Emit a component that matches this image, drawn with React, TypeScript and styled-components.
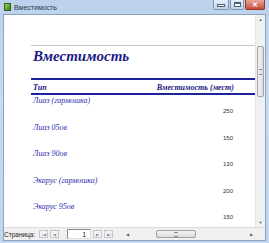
import React from 'react'
import styled, { createGlobalStyle } from 'styled-components'

const rows = [
  { name: 'Лиаз (гармошка)', seats: 250 },
  { name: 'Лиаз 05ов', seats: 150 },
  { name: 'Лиаз 90ов', seats: 130 },
  { name: 'Экарус (гармошка)', seats: 200 },
  { name: 'Экарус 95ов', seats: 150 },
]

const GlobalStyle = createGlobalStyle`
  html, body {
    margin: 0;
    padding: 0;
    background: #fff;
  }
`

const App: React.FC = () => {
  return (
    <>
      <GlobalStyle />
      <Window>
        <TitleBar>
          <AppIcon />
          <TitleText>Вместимость</TitleText>
          <Controls>
            <CtrlButton w={16}>
              <MinGlyph />
            </CtrlButton>
            <CtrlButton w={14}>
              <MaxGlyph />
            </CtrlButton>
            <CloseButton>✕</CloseButton>
          </Controls>
        </TitleBar>
        <Client>
          <Viewport>
            <Page>
              <PageRule />
              <ReportTitle>Вместимость</ReportTitle>
              <HeaderRow>
                <HeadCell>Тип</HeadCell>
                <HeadCell align="right">Вместимость (мест)</HeadCell>
              </HeaderRow>
              {rows.map((r) => (
                <Row key={r.name}>
                  <Name>{r.name}</Name>
                  <Seats>{r.seats}</Seats>
                </Row>
              ))}
            </Page>
            <VScroll>
              <ArrowBox>▲</ArrowBox>
              <VTrack>
                <VThumb>
                  <Grip />
                </VThumb>
              </VTrack>
              <ArrowBox>▼</ArrowBox>
            </VScroll>
          </Viewport>
          <StatusBar>
            <PageLabel>Страница:</PageLabel>
            <NavButton>|◀</NavButton>
            <NavButton>◀</NavButton>
            <PageInput>1</PageInput>
            <NavButton>▶</NavButton>
            <NavButton>▶|</NavButton>
            <HScroll>
              <HArrow>◀</HArrow>
              <HTrack>
                <HThumb>
                  <Grip vertical />
                </HThumb>
              </HTrack>
              <HArrow>▶</HArrow>
            </HScroll>
            <Corner />
          </StatusBar>
        </Client>
      </Window>
    </>
  )
}

const Window = styled.div`
  width: 269px;
  height: 243px;
  box-sizing: border-box;
  display: flex;
  flex-direction: column;
  background: linear-gradient(180deg, #bcd2ec 0%, #c6daf0 40%, #c0d6ee 100%);
  padding: 0 3px 2px 3px;
  font-family: 'Liberation Sans', Arial, sans-serif;
`

const TitleBar = styled.div`
  height: 14px;
  display: flex;
  align-items: center;
  gap: 3px;
`

const AppIcon = styled.div`
  width: 5px;
  height: 6px;
  margin-left: 1px;
  background: linear-gradient(135deg, #9bd35a, #3d7a1c);
  border: 1px solid #2f6212;
`

const TitleText = styled.span`
  font-size: 7px;
  color: #2a3646;
  flex: 1;
`

const Controls = styled.div`
  display: flex;
  align-self: flex-start;
  gap: 1px;
  margin-right: 1px;
`

const CtrlButton = styled.div<{ w: number }>`
  width: ${({ w }) => w}px;
  height: 10px;
  box-sizing: border-box;
  border: 1px solid #7f95b4;
  border-top: none;
  border-radius: 0 0 2px 2px;
  background: linear-gradient(180deg, #e6eef8, #c2d3ea);
  display: flex;
  align-items: center;
  justify-content: center;
`

const MinGlyph = styled.div`
  width: 6px;
  height: 1px;
  margin-top: 2px;
  background: #fff;
  border: 1px solid #4d5d74;
`

const MaxGlyph = styled.div`
  width: 5px;
  height: 2px;
  background: #fff;
  border: 1px solid #4d5d74;
  border-top-width: 2px;
`

const CloseButton = styled.div`
  width: 20px;
  height: 10px;
  box-sizing: border-box;
  border: 1px solid #8c3a32;
  border-top: none;
  border-radius: 0 0 2px 2px;
  background: linear-gradient(180deg, #eaa598, #c74c38);
  color: #fff;
  font-size: 7px;
  font-weight: bold;
  line-height: 9px;
  text-align: center;
`

const Client = styled.div`
  flex: 1;
  display: flex;
  flex-direction: column;
  border: 1px solid #8da2bd;
  background: #fff;
  min-height: 0;
`

const Viewport = styled.div`
  flex: 1;
  display: flex;
  min-height: 0;
`

const Page = styled.div`
  flex: 1;
  padding: 30px 0 0 27px;
  overflow: hidden;
`

const PageRule = styled.div`
  height: 1px;
  background: #c8c8c8;
`

const ReportTitle = styled.div`
  font-family: 'Liberation Serif', 'Times New Roman', serif;
  font-style: italic;
  font-weight: bold;
  font-size: 15px;
  color: #1a1a86;
  padding: 2px 0 0 2px;
  height: 28px;
  box-sizing: border-box;
`

const HeaderRow = styled.div`
  display: flex;
  justify-content: space-between;
  align-items: center;
  height: 17px;
  box-sizing: border-box;
  border-top: 2px solid #1f22a0;
  border-bottom: 2px solid #1f22a0;
  padding: 1px 21px 0 2px;
  margin-top: 4px;
`

const HeadCell = styled.span<{ align?: string }>`
  font-family: 'Liberation Serif', 'Times New Roman', serif;
  font-style: italic;
  font-weight: bold;
  font-size: 8px;
  color: #1a1a86;
  text-align: ${({ align }) => align || 'left'};
`

const Row = styled.div`
  height: 26.5px;
  display: flex;
  flex-direction: column;
  padding: 1px 22px 0 2px;
  box-sizing: border-box;
`

const Name = styled.span`
  font-family: 'Liberation Serif', 'Times New Roman', serif;
  font-style: italic;
  font-size: 8px;
  color: #2b2bb0;
`

const Seats = styled.span`
  align-self: flex-end;
  margin-top: 3px;
  font-size: 6px;
  color: #333;
`

const VScroll = styled.div`
  width: 9px;
  display: flex;
  flex-direction: column;
  background: #eef0f2;
  border-left: 1px solid #e4e6e8;
`

const ArrowBox = styled.div`
  height: 9px;
  font-size: 4px;
  color: #5a5a5a;
  text-align: center;
  line-height: 9px;
`

const VTrack = styled.div`
  flex: 1;
  padding-top: 22px;
`

const VThumb = styled.div`
  height: 51px;
  margin: 0 1px;
  box-sizing: border-box;
  border: 1px solid #9ea4aa;
  border-radius: 2px;
  background: linear-gradient(90deg, #f2f2f2, #dcdcdc);
  display: flex;
  align-items: center;
  justify-content: center;
`

const Grip = styled.div<{ vertical?: boolean }>`
  width: ${({ vertical }) => (vertical ? '4px' : '3px')};
  height: ${({ vertical }) => (vertical ? '3px' : '4px')};
  border-top: 1px solid #8a8a8a;
  border-bottom: 1px solid #8a8a8a;
`

const StatusBar = styled.div`
  height: 12px;
  display: flex;
  align-items: center;
  background: #f0f0f0;
  border-top: 1px solid #dcdcdc;
`

const PageLabel = styled.span`
  font-size: 6.5px;
  color: #222;
  margin: 0 4px 0 0;
`

const NavButton = styled.div`
  width: 9px;
  height: 8px;
  margin-right: 2px;
  box-sizing: border-box;
  border: 1px solid #c4c8cc;
  background: #f4f4f4;
  font-size: 4px;
  color: #8a8e94;
  text-align: center;
  line-height: 7px;
`

const PageInput = styled.div`
  width: 24px;
  height: 10px;
  margin: 0 2px 0 6px;
  box-sizing: border-box;
  border: 1px solid #8c8c8c;
  border-right-color: #dcdcdc;
  border-bottom-color: #dcdcdc;
  background: #fff;
  font-size: 7px;
  color: #222;
  text-align: right;
  padding-right: 4px;
  line-height: 9px;
`

const HScroll = styled.div`
  flex: 1;
  display: flex;
  align-items: center;
  margin-left: 8px;
  height: 100%;
`

const HArrow = styled.div`
  width: 9px;
  font-size: 4px;
  color: #5a5a5a;
  text-align: center;
`

const HTrack = styled.div`
  flex: 1;
  padding-left: 24px;
`

const HThumb = styled.div`
  width: 40px;
  height: 8px;
  box-sizing: border-box;
  border: 1px solid #9ea4aa;
  border-radius: 2px;
  background: linear-gradient(180deg, #f2f2f2, #dcdcdc);
  display: flex;
  align-items: center;
  justify-content: center;
`

const Corner = styled.div`
  width: 9px;
  height: 100%;
  background: #f0f0f0;
`

export default App
